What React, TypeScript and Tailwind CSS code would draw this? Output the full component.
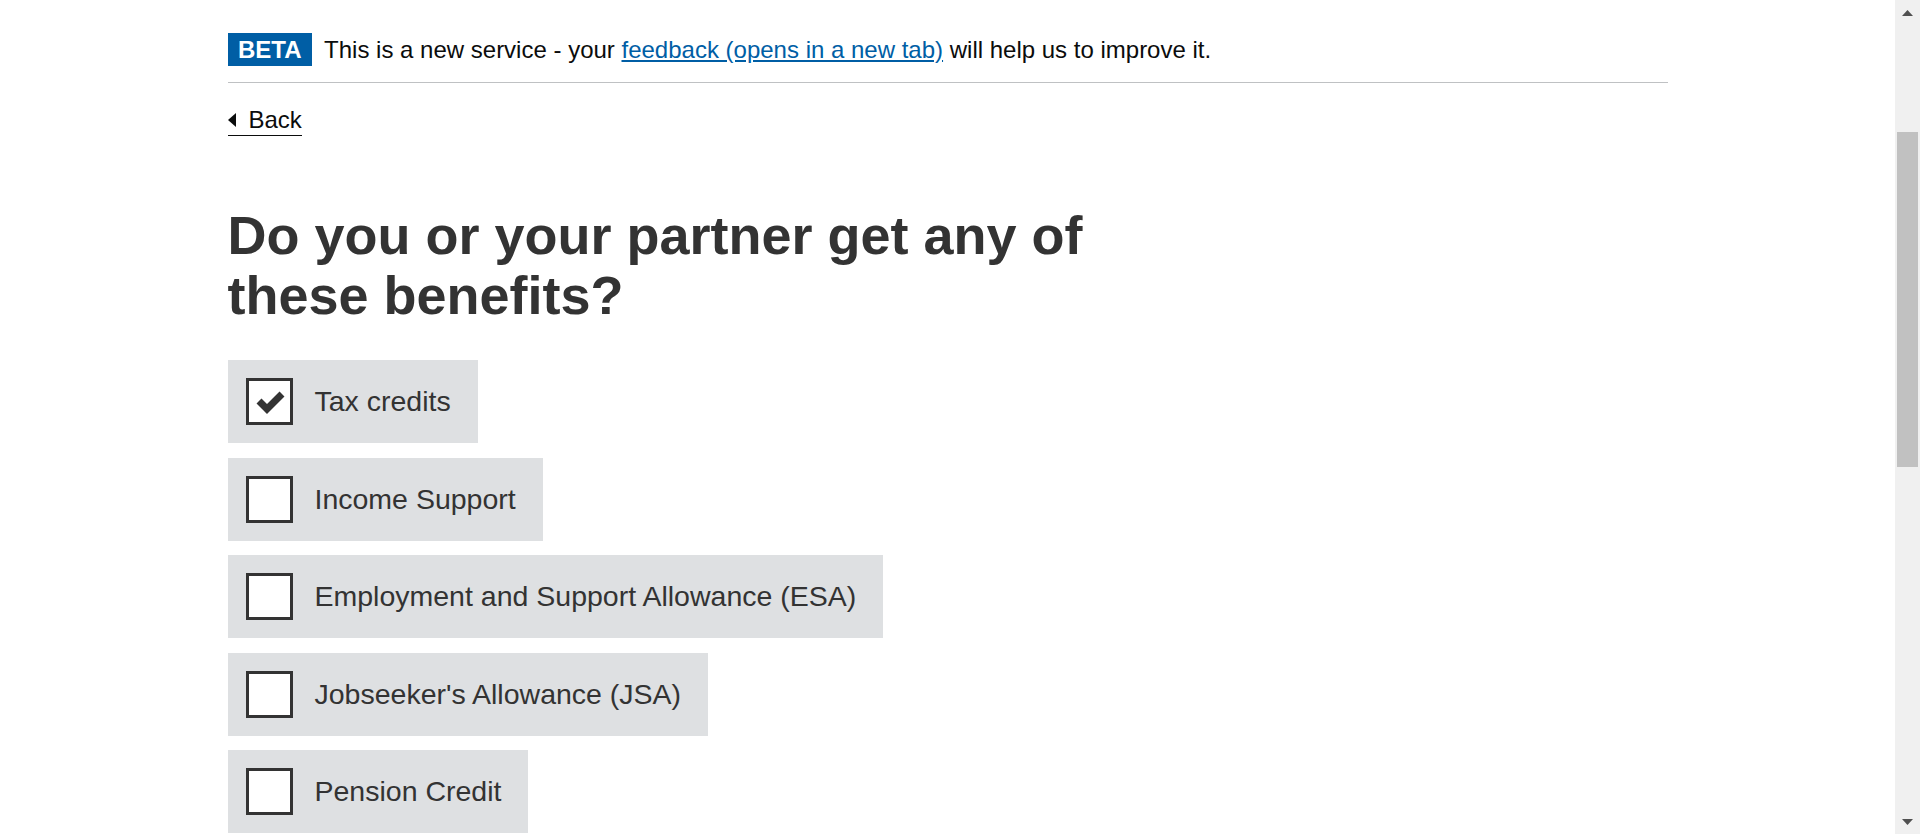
import React from "react";

const items = [
  { label: "Tax credits", checked: true },
  { label: "Income Support", checked: false },
  { label: "Employment and Support Allowance (ESA)", checked: false },
  { label: "Jobseeker's Allowance (JSA)", checked: false },
  { label: "Pension Credit", checked: false },
];

function CheckBox({ checked }: { checked: boolean }) {
  return (
    <div className="h-[47px] w-[47px] shrink-0 border-[3px] border-[#333333] bg-white">
      {checked && (
        <svg width="41" height="41" viewBox="0 0 41 41" className="block">
          <polyline
            points="10,20 18,28 33,13"
            fill="none"
            stroke="#333333"
            strokeWidth="7"
            strokeLinecap="butt"
            strokeLinejoin="miter"
          />
        </svg>
      )}
    </div>
  );
}

export default function App() {
  return (
    <div className="flex h-[834px] w-[1920px] overflow-hidden bg-white font-['Liberation_Sans',Arial,sans-serif]">
      <div className="min-w-0 flex-1">
        <div className="mx-auto w-[1440px]">
          {/* Phase banner */}
          <div className="flex items-center border-b border-[#bfc1c3] pb-[16px] pt-[33px]">
            <span className="flex h-[33px] items-center bg-[#005ea5] px-[10.5px] text-[24px] font-bold leading-none text-white">
              BETA
            </span>
            <span className="ml-[12px] text-[24px] leading-[28px] text-[#0b0c0c]">
              This is a new service - your{" "}
              <a href="#" className="text-[#005ea5] underline">
                feedback (opens in a new tab)
              </a>{" "}
              will help us to improve it.
            </span>
          </div>

          {/* Back link */}
          <div className="mt-[24px] flex">
            <a
              href="#"
              className="flex items-center border-b border-[#0b0c0c] pb-[3px] text-[24px] leading-[25px] text-[#0b0c0c]"
            >
              <svg width="8" height="14" viewBox="0 0 8 14" className="mr-[13px] block">
                <polygon points="8,0 8,14 0,7" fill="#0b0c0c" />
              </svg>
              Back
            </a>
          </div>

          {/* Heading */}
          <h1 className="mt-[69px] max-w-[960px] text-[54px] font-bold leading-[60px] text-[#333333]">
            Do you or your partner get any of these benefits?
          </h1>

          {/* Checkboxes */}
          <div className="mt-[35px] flex flex-col items-start gap-[14.5px]">
            {items.map((it) => (
              <label
                key={it.label}
                className="flex h-[83px] items-center bg-[#dee0e2] pl-[18px] pr-[27px]"
              >
                <CheckBox checked={it.checked} />
                <span className="ml-[22px] pb-[1px] text-[28.5px] leading-[32px] text-[#333333]">
                  {it.label}
                </span>
              </label>
            ))}
          </div>
        </div>
      </div>

      {/* Scrollbar */}
      <div className="flex w-[25px] shrink-0 flex-col bg-[#f0f0f0]">
        <div className="flex h-[25px] items-center justify-center">
          <svg width="11" height="6" viewBox="0 0 11 6" className="block">
            <polygon points="0,6 11,6 5.5,0" fill="#505050" />
          </svg>
        </div>
        <div className="flex flex-1 flex-col items-center pt-[107px]">
          <div className="h-[335px] w-[21px] bg-[#c1c1c1]" />
        </div>
        <div className="flex h-[25px] items-center justify-center">
          <svg width="11" height="6" viewBox="0 0 11 6" className="block">
            <polygon points="0,0 11,0 5.5,6" fill="#505050" />
          </svg>
        </div>
      </div>
    </div>
  );
}
